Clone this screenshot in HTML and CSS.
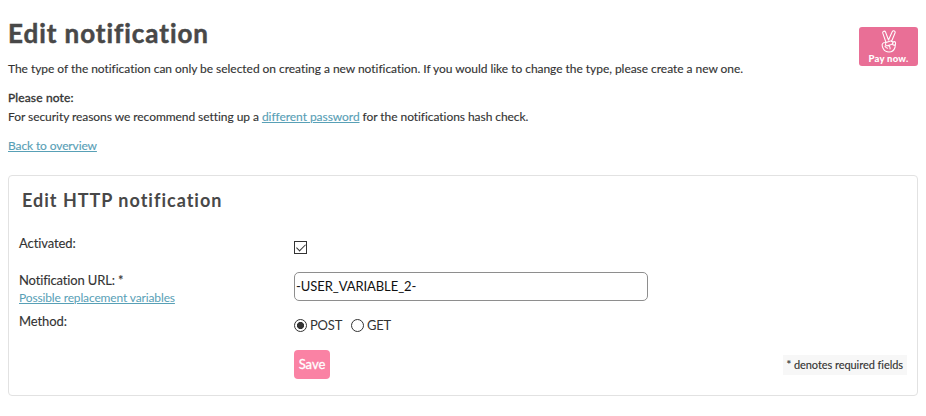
FILE: index.html
```html
<!DOCTYPE html>
<html lang="en">
<head>
<meta charset="utf-8">
<title>Edit notification</title>
<link rel="stylesheet" href="styles.css">
</head>
<body>
<main class="page">
  <header class="header">
    <h1 class="title">Edit notification</h1>
    <div class="pay">
      <svg class="pay-icon" viewBox="0 0 16 23" aria-hidden="true">
        <path d="M5 12.5 1.8 3.2Q1.4 1.6 2.8 1.2 4.1.9 4.6 2.2L7.5 10 M7.5 10 11.2 1.7Q12 .4 13.3 1 14.6 1.7 14 3L10.5 11.5 M5 12.5Q2 12.2 1.3 14.2.8 16 2.2 18.5 4 22 8 22 12.5 22 14 17.5L14.6 13.2Q14.6 11.6 13.2 11.6 12 11.6 11.8 13V14.7 M5 12.5 9.5 11.1Q11.4 10.7 11.8 12.4 12 13.8 10.4 14.4L6.3 15.7Q4.8 16 4.6 14.6 4.5 13.2 5.2 12.5 M7.2 15.5Q9.5 16 9 19 M4 16.2Q5 18 6.6 18.2 M11.8 14.4Q13 16 14.2 14.6"/>
      </svg>
      <span class="pay-text">Pay now.</span>
    </div>
  </header>
  <p class="text intro">The type of the notification can only be selected on creating a new notification. If you would like to change the type, please create a new one.</p>
  <p class="text note"><span class="strong">Please note:</span><br><span class="security">For security reasons we recommend setting up a <a href="#">different password</a> for the notifications hash check.</span></p>
  <p class="text back"><a href="#">Back to overview</a></p>

  <form class="panel">
    <h2 class="panel-title">Edit HTTP notification</h2>
    <div class="row row-active">
      <label class="label activated" for="active">Activated:</label>
      <div class="field"><input class="check" type="checkbox" id="active" checked></div>
    </div>
    <div class="row row-url">
      <div class="label-group">
        <label class="label url-label" for="url">Notification URL: *</label>
        <a class="help" href="#">Possible replacement variables</a>
      </div>
      <input class="input" id="url" type="text" value="-USER_VARIABLE_2-">
    </div>
    <div class="row row-method">
      <span class="label method">Method:</span>
      <div class="radios">
        <label class="option post"><input class="radio" type="radio" name="method" checked>POST</label>
        <label class="option get"><input class="radio" type="radio" name="method">GET</label>
      </div>
    </div>
    <div class="actions">
      <button class="save" type="button">Save</button>
      <span class="required">* denotes required fields</span>
    </div>
  </form>
</main>
</body>
</html>
```
FILE: styles.css
```css
* { box-sizing: border-box; }
body { margin: 0; background: #fff; color: #333; font-family: Lato, "Open Sans", sans-serif; }
h1, h2, p { margin: 0; }
a { color: #58a0b6; text-decoration: underline; text-underline-offset: 1px; text-decoration-thickness: 1px; }
.page { width: 926px; height: 416px; padding: 15px 8px 0; }
.header { display: flex; justify-content: space-between; height: 44px; }
.title { font: 700 26px/36px Lato, sans-serif; color: #484848; letter-spacing: .95px; white-space: nowrap; -webkit-text-stroke: .5px #484848; }
.pay { width: 59px; height: 39px; margin-top: 12px; border-radius: 3px; background: #e96f96; display: flex; flex-direction: column; align-items: center; padding-top: 3px; color: #fff; }
.pay-icon { width: 16px; height: 23px; flex: none; fill: none; stroke: #fff; stroke-width: 1.05; stroke-linejoin: round; stroke-linecap: round; }
.pay-text { font-size: 9.5px; line-height: 12px; font-weight: 900; letter-spacing: .25px; white-space: nowrap; }
.text { font-size: 12px; line-height: 19px; letter-spacing: -.04px; white-space: nowrap; -webkit-text-stroke: .12px currentColor; }
.note { margin-top: 10px; }
.security { letter-spacing: -.057px; }
.strong { letter-spacing: .14px; -webkit-text-stroke: .35px currentColor; }
.back { margin-top: 10px; letter-spacing: -.12px; }
.panel { width: 910px; height: 221px; margin-top: 20px; border: 1px solid #e2e2e2; border-radius: 4px; padding: 10px 10px 0; }
.panel-title { font: 700 18px/28px Lato, sans-serif; color: #484848; letter-spacing: 1px; padding-left: 3px; white-space: nowrap; }
.row { display: grid; grid-template-columns: 275px 1fr; }
.row-active { height: 39px; margin-top: 19px; }
.label { font-size: 13px; line-height: 20px; letter-spacing: -.1px; white-space: nowrap; -webkit-text-stroke: .12px currentColor; }
.url-label { letter-spacing: -.15px; }
.field { padding-top: 8px; }
.check { appearance: none; display: block; width: 13px; height: 13px; margin: 0; border: 1px solid #333; background: #fff; position: relative; }
.check::after { content: ""; position: absolute; left: 3px; top: 1px; width: 8px; height: 4px; border: solid #333; border-width: 0 0 1.4px 1.4px; transform: translate(-1.5px, 1px) rotate(-45deg); }
.row-url { height: 39px; align-items: start; }
.label-group { display: flex; flex-direction: column; align-items: flex-start; margin-top: -2px; }
.help { font-size: 12px; line-height: 15px; letter-spacing: -.14px; white-space: nowrap; }
.input { width: 354px; height: 29px; border: 1px solid #8e8e8e; border-radius: 5px; padding: 0 1px 1px; background: #fff; color: #111; font: 400 13px/20px Lato, sans-serif; letter-spacing: -.07px; }
.row-method { height: 39px; }
.radios { display: flex; padding-top: 4px; height: 24px; }
.option { display: flex; align-items: center; font-size: 13px; line-height: 20px; gap: 3px; letter-spacing: -.2px; white-space: nowrap; }
.post { width: 57px; }
.radio { appearance: none; flex: none; width: 13px; height: 13px; margin: 0; border: 1px solid #333; border-radius: 50%; background: #fff; }
.radio:checked { background: radial-gradient(circle, #333 3.2px, #fff 3.9px); }
.actions { display: flex; justify-content: space-between; align-items: center; margin-left: 275px; height: 29px; }
.save { width: 36px; height: 29px; border: 0; border-radius: 4px; background: #fa82a4; color: #fff; font: 400 13px/20px Lato, sans-serif; padding: 0 0 1px; -webkit-text-stroke: .3px #fff; }
.required { height: 20px; padding: 0 4px; background: #f7f7f7; font-size: 11px; line-height: 20px; letter-spacing: -.06px; white-space: nowrap; -webkit-text-stroke: .12px currentColor; }
```
